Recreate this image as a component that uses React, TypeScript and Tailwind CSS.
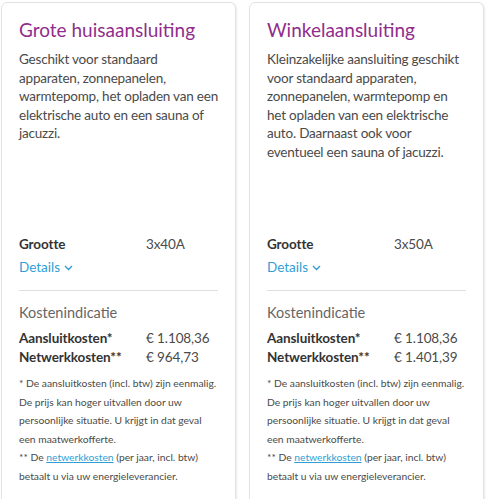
import React from "react";

const font = { fontFamily: "Lato, 'Open Sans', Arial, sans-serif" };

function Chevron() {
  return (
    <svg width="9" height="6" viewBox="0 0 9 6" className="ml-[4px] mt-[2px]" fill="none">
      <path d="M1 1l3.5 3.5L8 1" stroke="#2f9fd6" strokeWidth="1.4" />
    </svg>
  );
}

type CardProps = {
  title: string;
  desc: string;
  size: string;
  aansluit: string;
  netwerk: string;
};

function Card({ title, desc, size, aansluit, netwerk }: CardProps) {
  return (
    <div className="w-[235px] h-[520px] shrink-0 rounded-[6px] border border-[#e2e2e2] bg-white pl-[17px] pr-[15px] pt-[13px] shadow-[1px_1px_2px_rgba(0,0,0,0.08)]">
      <div className="h-[219px]">
        <h2 className="text-[19px] leading-[28px] text-[#8f2d8c]">{title}</h2>
        <p className="mt-[6px] text-[13.5px] leading-[18.5px] tracking-[-0.2px] text-[#4a4a4a]">{desc}</p>
      </div>
      <div className="flex text-[13.5px] leading-[18px] tracking-[-0.1px]">
        <div className="w-[127px] font-bold text-[#333]">Grootte</div>
        <div className="text-[#4a4a4a]">{size}</div>
      </div>
      <div className="mt-[4px] flex items-center text-[13.5px] leading-[20px] text-[#2f9fd6]">
        Details
        <Chevron />
      </div>
      <div className="mt-[13px] mr-[2px] h-px bg-[#dedede]" />
      <div className="mt-[12px] text-[14.5px] leading-[20px] text-[#666]">Kostenindicatie</div>
      <div className="mt-[6px] text-[13.5px] leading-[19px] tracking-[-0.1px]">
        <div className="flex">
          <div className="w-[127px] font-bold text-[#333]">Aansluitkosten*</div>
          <div className="text-[#4a4a4a]">{aansluit}</div>
        </div>
        <div className="flex">
          <div className="w-[127px] font-bold text-[#333]">Netwerkkosten**</div>
          <div className="text-[#4a4a4a]">{netwerk}</div>
        </div>
      </div>
      <div className="mt-[7px] mr-[2px] text-[10.3px] leading-[18.5px] text-[#4a4a4a]">
        <p>
          * De aansluitkosten (incl. btw) zijn eenmalig. De prijs kan hoger uitvallen door uw persoonlijke situatie. U krijgt in dat geval een maatwerkofferte.
        </p>
        <p>
          ** De <span className="text-[#2f9fd6] underline">netwerkkosten</span> (per jaar, incl. btw) betaalt u via uw energieleverancier.
        </p>
      </div>
    </div>
  );
}

export default function App() {
  return (
    <div className="h-[499px] w-[486px] overflow-hidden bg-white" style={font}>
      <div className="flex gap-[13px] pl-[1px] pt-[2px]">
        <Card
          title="Grote huisaansluiting"
          desc="Geschikt voor standaard apparaten, zonnepanelen, warmtepomp, het opladen van een elektrische auto en een sauna of jacuzzi."
          size="3x40A"
          aansluit="€ 1.108,36"
          netwerk="€ 964,73"
        />
        <Card
          title="Winkelaansluiting"
          desc="Kleinzakelijke aansluiting geschikt voor standaard apparaten, zonnepanelen, warmtepomp en het opladen van een elektrische auto. Daarnaast ook voor eventueel een sauna of jacuzzi."
          size="3x50A"
          aansluit="€ 1.108,36"
          netwerk="€ 1.401,39"
        />
      </div>
    </div>
  );
}
